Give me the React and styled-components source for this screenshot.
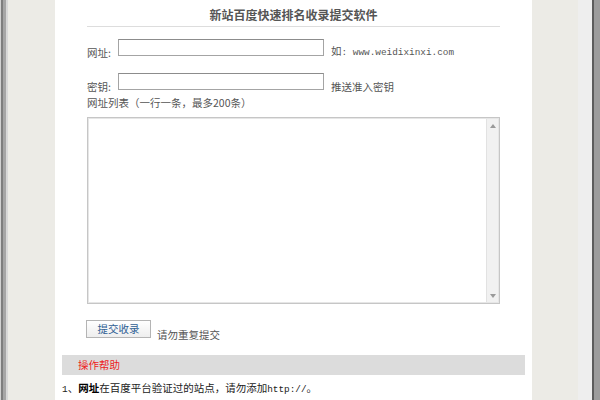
import React from "react";
import styled, { createGlobalStyle } from "styled-components";

const CJK = `"Noto Sans CJK SC", "Noto Sans", sans-serif`;
const MONO = `"Liberation Mono", "DejaVu Sans Mono", monospace`;

const Global = createGlobalStyle`
  html, body {
    margin: 0;
    padding: 0;
    background: #fff;
    overflow: hidden;
  }
  * { box-sizing: border-box; }
`;

// 창 틀 전체
const Frame = styled.div`
  display: flex;
  width: 600px;
  height: 400px;
  font-family: ${CJK};
  font-size: 10.5px;
  color: #555;
`;

const EdgeLeft = styled.div`
  width: 8px;
  background: linear-gradient(
    to right,
    #d2d2d2 0 1px,
    #7e7e7e 1px 3px,
    #a6a6a6 3px 6px,
    #d8d8d8 6px 8px
  );
`;

const EdgeRight = styled.div`
  width: 22px;
  background: linear-gradient(
    to right,
    #eeeeee 0 14px,
    #5c5c5c 14px 16px,
    #9c9c9c 16px 22px
  );
`;

const Gutter = styled.div`
  width: ${(props) => props.w || "47px"};
  background: #ecebe6;
`;

const Panel = styled.div`
  width: 477px;
  background: #fff;
  display: flex;
  flex-direction: column;
`;

const Inner = styled.div`
  padding: 0 32px;
  display: flex;
  flex-direction: column;
`;

const Title = styled.h1`
  margin: 0;
  padding: 6px 0 2px;
  line-height: 18px;
  font-size: 12px;
  font-weight: bold;
  text-align: center;
  color: #555;
  border-bottom: 1px solid #dddddd;
`;

// 한 줄 (라벨 + 입력칸 + 안내)
const Row = styled.div`
  display: flex;
  align-items: flex-end;
  margin-top: ${(props) => props.mt || "0px"};
`;

const Label = styled.span`
  width: 31px;
  line-height: 12px;
  margin-bottom: -3px;
  white-space: nowrap;
`;

const Field = styled.input`
  width: 206px;
  height: 17px;
  border: 1px solid #a4a4a4;
  border-top-color: #8c8c8c;
  padding: 0 2px;
  background: #fff;
  outline: none;
`;

const Hint = styled.span`
  margin-left: ${(props) => props.ml || "7px"};
  line-height: 12px;
  margin-bottom: -3px;
  white-space: nowrap;
  color: #555;
`;

const Mono = styled.span`
  font-family: ${MONO};
  font-size: 9.4px;
`;

const ListLabel = styled.div`
  margin-top: 7px;
  line-height: 12px;
`;

const ListBox = styled.div`
  margin-top: 8px;
  height: 187px;
  display: flex;
  border: 1px solid #c6c6c6;
  box-shadow: inset 0 0 0 1px #e6e6e6;
  padding: 1px;
`;

const Area = styled.textarea`
  flex: 1;
  border: none;
  resize: none;
  outline: none;
  background: #fff;
  font-family: ${CJK};
  font-size: 10.5px;
`;

const Track = styled.div`
  width: 12px;
  background: #f1f1f1;
  border-left: 1px solid #e2e2e2;
  display: flex;
  flex-direction: column;
  justify-content: space-between;
  align-items: center;
  padding: 5px 0 4px;
`;

const Arrow = ({ down }) => (
  <svg width="6" height="4" viewBox="0 0 6 4">
    <path d={down ? "M0 0 L6 0 L3 4 Z" : "M0 4 L6 4 L3 0 Z"} fill="#9a9a9a" />
  </svg>
);

const Submit = styled.button`
  width: 65px;
  height: 18px;
  padding: 0;
  margin-left: -1px;
  border: 1px solid #b4b4b4;
  background: linear-gradient(#ffffff, #eeeeee);
  color: #2f5f94;
  font-family: ${CJK};
  font-size: 10.5px;
  line-height: 16px;
`;

const HelpBar = styled.div`
  margin: 17px 7px 0;
  height: 20px;
  background: #dcdcdc;
  color: #ee1c1c;
  padding-left: 16px;
  line-height: 20px;
`;

const HelpLine = styled.div`
  margin: 7px 7px 0;
  line-height: 12px;
  color: #222;
  white-space: nowrap;
`;

const Strong = styled.b`
  color: #000;
`;

export default function App() {
  return (
    <>
      <Global />
      <Frame>
        <EdgeLeft />
        <Gutter w="47px" />
        <Panel>
          <Inner>
            <Title>新站百度快速排名收录提交软件</Title>
            <Row mt="12px">
              <Label>网址:</Label>
              <Field />
              <Hint>
                如<Mono>: www.weidixinxi.com</Mono>
              </Hint>
            </Row>
            <Row mt="17px">
              <Label>密钥:</Label>
              <Field />
              <Hint>推送准入密钥</Hint>
            </Row>
            <ListLabel>网址列表（一行一条，最多200条）</ListLabel>
            <ListBox>
              <Area />
              <Track>
                <Arrow />
                <Arrow down />
              </Track>
            </ListBox>
            <Row mt="16px">
              <Submit>提交收录</Submit>
              <Hint ml="6px">请勿重复提交</Hint>
            </Row>
          </Inner>
          <HelpBar>操作帮助</HelpBar>
          <HelpLine>
            <Mono>1</Mono>、<Strong>网址</Strong>在百度平台验证过的站点，请勿添加
            <Mono>http://</Mono>。
          </HelpLine>
        </Panel>
        <Gutter w="46px" />
        <EdgeRight />
      </Frame>
    </>
  );
}
